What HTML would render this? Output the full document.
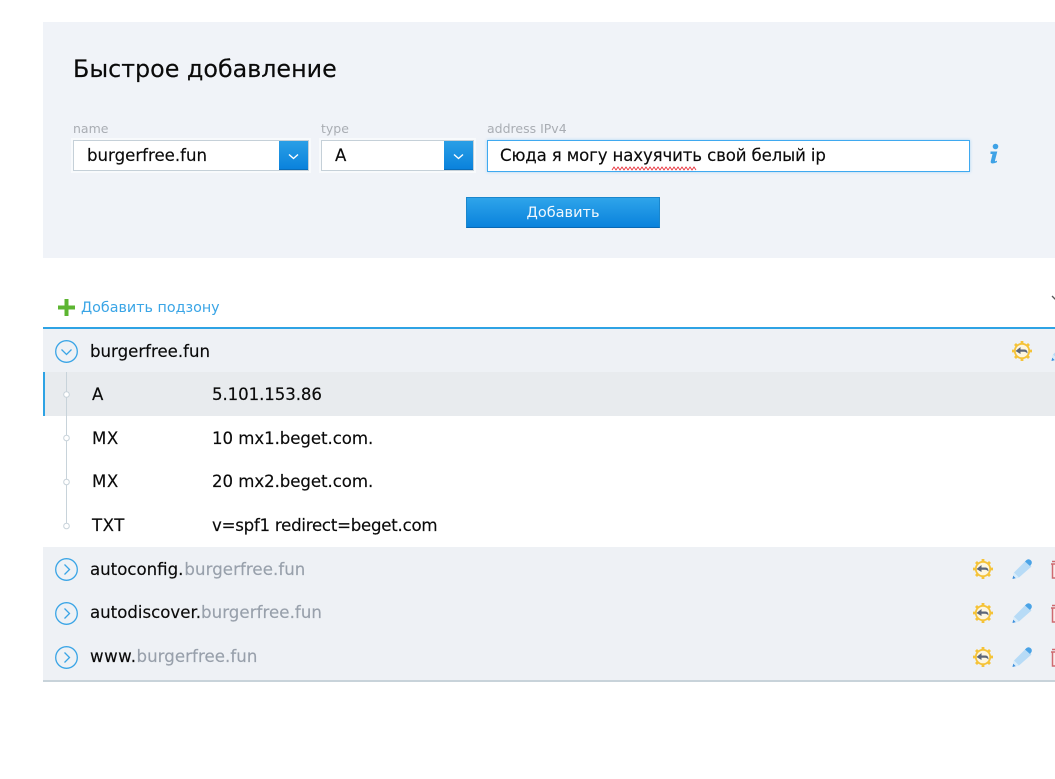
<!DOCTYPE html>
<html><head><meta charset="utf-8">
<style>
html,body{margin:0;padding:0;background:#fff}
body{width:1055px;height:779px;position:relative;overflow:hidden;font-family:"DejaVu Sans","Liberation Sans",sans-serif;color:#0a0a0a}
.a{position:absolute;white-space:nowrap}
.t{font-size:16.6px;line-height:22px;letter-spacing:0;-webkit-text-stroke:.15px #0a0a0a}
.l{font-size:12.5px;line-height:16px;color:#a9adb3}
.g{color:#98a0ab;-webkit-text-stroke:.15px #98a0ab}
.sel{position:absolute;top:140px;height:29px;background:#fff;border:1px solid #c5d0d8;box-shadow:0 0 0 2px #f8fafc}
.btn{position:absolute;top:141px;height:29px;width:29px;background:linear-gradient(#2a9fe6,#0a82dc);border-bottom:1px solid #0a6cb8;box-sizing:border-box}
svg{position:absolute;overflow:visible}
</style></head><body>
<div class="a" style="left:43px;top:22px;width:1012px;height:236px;background:#f0f3f8"></div>
<div class="a" style="left:73px;top:54px;font-size:23.8px;line-height:30px;color:#0a0a0a;-webkit-text-stroke:.15px #0a0a0a">Быстрое добавление</div>

<div class="a l" style="left:73px;top:121px">name</div>
<div class="a l" style="left:321px;top:121px">type</div>
<div class="a l" style="left:487px;top:121px">address IPv4</div>

<div class="sel" style="left:73px;width:234px"></div>
<div class="a t" style="left:87px;top:145px">burgerfree.fun</div>
<div class="btn" style="left:279px"></div>
<svg style="left:279px;top:141px" width="29" height="29"><path d="M10 13.500l4.500 4 4.500-4" fill="none" stroke="#fff" stroke-width="1.400"/></svg>

<div class="sel" style="left:321px;width:151px"></div>
<div class="a t" style="left:335px;top:145px">A</div>
<div class="btn" style="left:444px"></div>
<svg style="left:444px;top:141px" width="29" height="29"><path d="M10 13.500l4.500 4 4.500-4" fill="none" stroke="#fff" stroke-width="1.400"/></svg>

<div class="a" style="left:487px;top:140px;width:481px;height:30px;background:#fff;border:1px solid #3fa9f0;box-shadow:0 0 3px #a8d4f4"></div>
<div class="a t" style="left:500px;top:145px;letter-spacing:-.14px">Сюда я могу нахуячить свой белый ip</div>
<svg style="left:612px;top:166px" width="88" height="6"><path d="M0 4l2-3 2 3 2-3 2 3 2-3 2 3 2-3 2 3 2-3 2 3 2-3 2 3 2-3 2 3 2-3 2 3 2-3 2 3 2-3 2 3 2-3 2 3 2-3 2 3 2-3 2 3 2-3 2 3 2-3 2 3 2-3 2 3 2-3 2 3 2-3 2 3 2-3 2 3 2-3 2 3 2-3 2 3" fill="none" stroke="#e8303a" stroke-width="0.900"/></svg>
<svg style="left:987px;top:143px" width="14" height="22"><g fill="#3fa2e6"><circle cx="8.500" cy="3.500" r="2.800"/><path d="M3.500 8.500h6.800L8 17.500q-.2 1 1 .6l1-.5v1.500q-2.200 1.400-4.500 1.400-2.300-.1-1.700-2.500l1.700-7H3.500z"/></g></svg>

<div class="a" style="left:466px;top:197px;width:194px;height:31px;background:linear-gradient(#2ea4ea,#0a82dc);border:1px solid #1a86cc;border-bottom:1px solid #0868b4;box-sizing:border-box;color:#f0f7fd;font-size:14.5px;line-height:30px;text-align:center">Добавить</div>

<svg style="left:58px;top:298.500px" width="17" height="17"><path d="M6.500 0h4v6.500H17v4h-6.500V17h-4v-6.500H0v-4h6.500z" fill="#5cb531"/></svg>
<div class="a" style="left:81px;top:298px;font-size:14.300px;line-height:20px;color:#3aa5e6">Добавить подзону</div>
<svg style="left:1052px;top:296px" width="4" height="6"><path d="M0 0l5 5" stroke="#555" stroke-width="1.300" fill="none"/></svg>

<div class="a" style="left:43px;top:327px;width:1012px;height:2px;background:#2ea3e4"></div>
<div class="a" style="left:43px;top:329px;width:1012px;height:43px;background:#eef1f5"></div>
<div class="a" style="left:43px;top:372px;width:1012px;height:44px;background:#e8ebee"></div>
<div class="a" style="left:43px;top:372px;width:2px;height:44px;background:#2ea3e4"></div>
<div class="a" style="left:43px;top:547px;width:1012px;height:133px;background:#eef1f5"></div>
<div class="a" style="left:43px;top:680px;width:1012px;height:2px;background:#c8d3da"></div>

<div class="a" style="left:66px;top:372px;width:1px;height:153px;background:#c8d3da"></div>
<svg style="left:62px;top:390px" width="9" height="140"><g fill="#fff" stroke="#c8d3da" stroke-width="1"><circle cx="4.500" cy="4.500" r="2.800"/><circle cx="4.500" cy="48" r="2.800"/><circle cx="4.500" cy="92" r="2.800"/><circle cx="4.500" cy="136" r="2.800"/></g></svg>

<svg style="left:55px;top:340px" width="23" height="23"><circle cx="11.500" cy="11.500" r="10.800" fill="none" stroke="#3aa5e6" stroke-width="1.300"/><path d="M6.500 9.500l5 5 5-5" fill="none" stroke="#3aa5e6" stroke-width="1.300"/></svg>
<svg style="left:55px;top:558px" width="23" height="23"><circle cx="11.500" cy="11.500" r="10.800" fill="none" stroke="#3aa5e6" stroke-width="1.300"/><path d="M9.500 6.500l5 5-5 5" fill="none" stroke="#3aa5e6" stroke-width="1.300"/></svg>
<svg style="left:55px;top:602px" width="23" height="23"><circle cx="11.500" cy="11.500" r="10.800" fill="none" stroke="#3aa5e6" stroke-width="1.300"/><path d="M9.500 6.500l5 5-5 5" fill="none" stroke="#3aa5e6" stroke-width="1.300"/></svg>
<svg style="left:55px;top:646px" width="23" height="23"><circle cx="11.500" cy="11.500" r="10.800" fill="none" stroke="#3aa5e6" stroke-width="1.300"/><path d="M9.500 6.500l5 5-5 5" fill="none" stroke="#3aa5e6" stroke-width="1.300"/></svg>

<div class="a t" style="left:90px;top:341px">burgerfree.fun</div>
<div class="a t" style="left:92px;top:384px">A</div><div class="a t" style="left:212px;top:384px;letter-spacing:-.08px">5.101.153.86</div>
<div class="a t" style="left:92px;top:428px;letter-spacing:.6px">MX</div><div class="a t" style="left:212px;top:428px;letter-spacing:-.06px">10 mx1.beget.com.</div>
<div class="a t" style="left:92px;top:471px;letter-spacing:.6px">MX</div><div class="a t" style="left:212px;top:471px;letter-spacing:-.06px">20 mx2.beget.com.</div>
<div class="a t" style="left:92px;top:515px;letter-spacing:.5px">TXT</div><div class="a t" style="left:212px;top:515px;letter-spacing:-.24px">v=spf1 redirect=beget.com</div>
<div class="a t" style="left:90px;top:559px">autoconfig.<span class="g" style="margin-left:1px;letter-spacing:.07px">burgerfree.fun</span></div>
<div class="a t" style="left:90px;top:602px">autodiscover.<span class="g" style="letter-spacing:.07px">burgerfree.fun</span></div>
<div class="a t" style="left:90px;top:646px;letter-spacing:.5px">www.<span class="g" style="letter-spacing:.07px">burgerfree.fun</span></div>

<svg width="0" height="0" style="left:0;top:0"><defs>
<g id="gear"><path d="M10 0v20M0 10h20M3 3l14 14M17 3L3 17" stroke="#f5c338" stroke-width="2.800"/><circle cx="10" cy="10" r="7.200" fill="#fdf6e0" stroke="#f5c338" stroke-width="1.800"/><path d="M3.500 10l5-4v2.500h4q3 0 3 4-1.500-1.800-3-1.800h-4V13z" fill="#5d6678"/></g>
<g id="pen"><path d="M0.500 20l1.500-6.500L13.500 2l6 5.500L7 18.500z" fill="#b7dbf6"/><path d="M13 2.500l1.500-1.500q2-1.500 4 0t1 4l-1.500 2z" fill="#4aa3e6"/><path d="M0.500 20l1.500-6.500 5 5z" fill="#d8ecfa"/><path d="M0.500 20l.7-3.200 2.500 2.300z" fill="#3d8fdc"/></g>
<g id="bin"><path d="M1 1.500h6M0 4h8M1.500 4v14h6V4" fill="#fbeaea" stroke="#cf6a70" stroke-width="1.500"/></g>
</defs></svg>

<svg style="left:1012px;top:340.500px" width="20" height="20"><use href="#gear"/></svg>
<svg style="left:1051px;top:341px" width="20" height="20"><use href="#pen"/></svg>

<svg style="left:973px;top:559px" width="20" height="20"><use href="#gear"/></svg>
<svg style="left:1012px;top:559px" width="20" height="20"><use href="#pen"/></svg>
<svg style="left:1051px;top:560px" width="4" height="19"><use href="#bin"/></svg>
<svg style="left:973px;top:603px" width="20" height="20"><use href="#gear"/></svg>
<svg style="left:1012px;top:603px" width="20" height="20"><use href="#pen"/></svg>
<svg style="left:1051px;top:604px" width="4" height="19"><use href="#bin"/></svg>
<svg style="left:973px;top:647px" width="20" height="20"><use href="#gear"/></svg>
<svg style="left:1012px;top:647px" width="20" height="20"><use href="#pen"/></svg>
<svg style="left:1051px;top:648px" width="4" height="19"><use href="#bin"/></svg>
</body></html>
